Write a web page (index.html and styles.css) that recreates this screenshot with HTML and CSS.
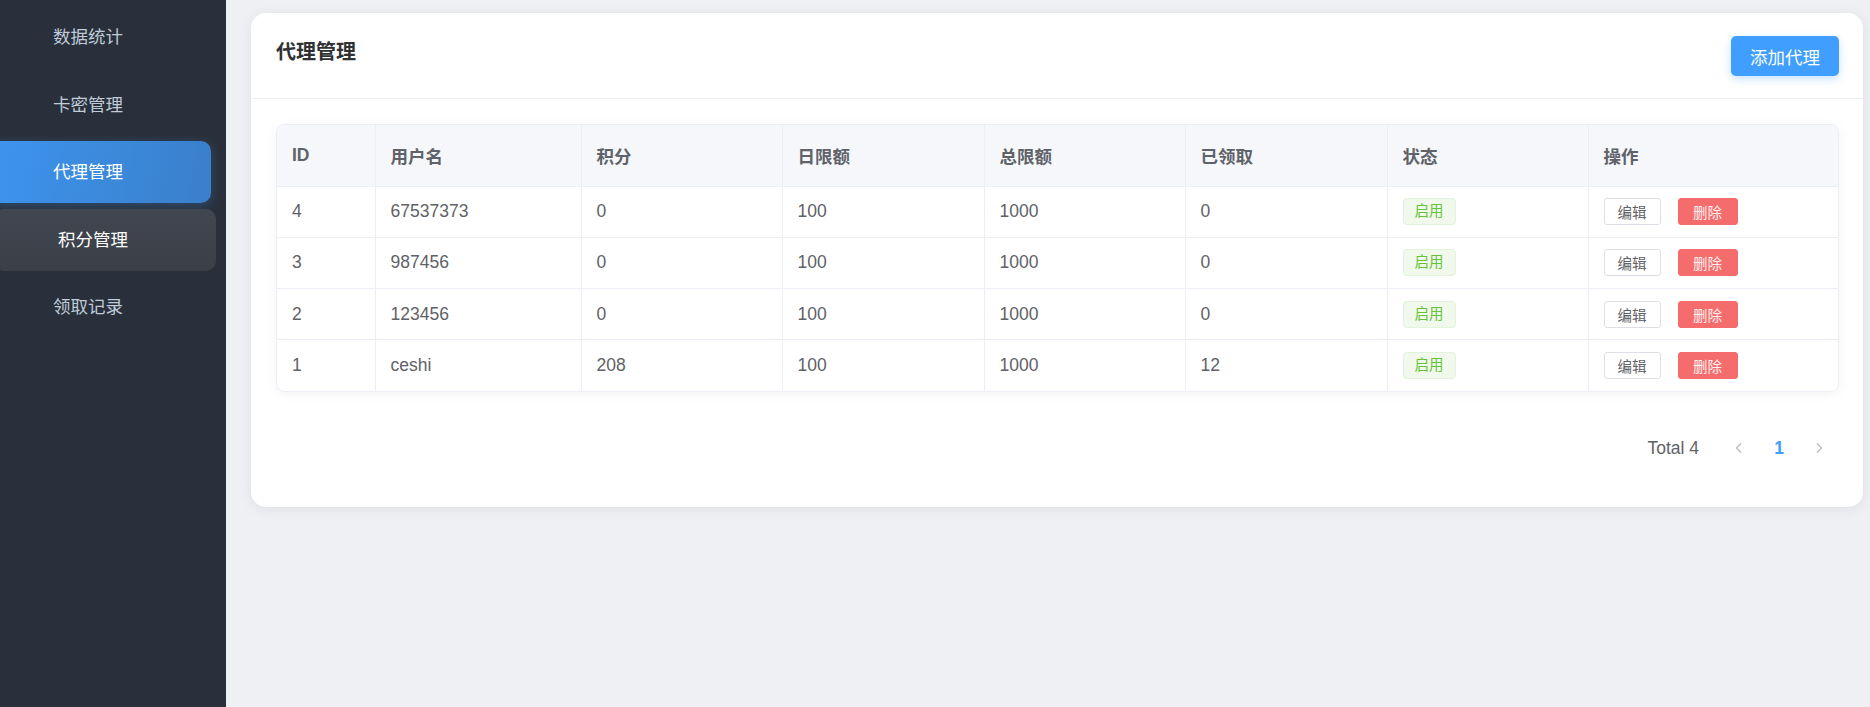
FILE: index.html
```html
<!DOCTYPE html>
<html lang="zh-CN">
<head>
<meta charset="UTF-8">
<meta name="viewport" content="width=device-width, initial-scale=1.0">
<title>代理管理</title>
<link rel="stylesheet" href="styles.css">
</head>
<body>

<div class="layout">
  <!-- 侧边菜单 -->
  <aside class="sidebar">
    <ul class="menu">
      <li class="menu-item">数据统计</li>
      <li class="menu-item">卡密管理</li>
      <li class="menu-item active">代理管理</li>
      <li class="menu-item hover">积分管理</li>
      <li class="menu-item">领取记录</li>
    </ul>
  </aside>

  <main class="main">
    <div class="card">
      <div class="card-header">
        <h2 class="card-title">代理管理</h2>
        <button class="btn-primary" type="button">添加代理</button>
      </div>

      <div class="card-body">
        <div class="table-wrap">
          <table class="agent-table">
            <colgroup>
              <col style="width: 98px">
              <col style="width: 206px">
              <col style="width: 201px">
              <col style="width: 202px">
              <col style="width: 201px">
              <col style="width: 202px">
              <col style="width: 201px">
              <col>
            </colgroup>
            <thead>
              <tr>
                <th>ID</th>
                <th>用户名</th>
                <th>积分</th>
                <th>日限额</th>
                <th>总限额</th>
                <th>已领取</th>
                <th>状态</th>
                <th>操作</th>
              </tr>
            </thead>
            <tbody>
              <tr>
                <td>4</td>
                <td>67537373</td>
                <td>0</td>
                <td>100</td>
                <td>1000</td>
                <td>0</td>
                <td><span class="tag">启用</span></td>
                <td class="actions"><button class="btn-small">编辑</button><button class="btn-small danger">删除</button></td>
              </tr>
              <tr>
                <td>3</td>
                <td>987456</td>
                <td>0</td>
                <td>100</td>
                <td>1000</td>
                <td>0</td>
                <td><span class="tag">启用</span></td>
                <td class="actions"><button class="btn-small">编辑</button><button class="btn-small danger">删除</button></td>
              </tr>
              <tr>
                <td>2</td>
                <td>123456</td>
                <td>0</td>
                <td>100</td>
                <td>1000</td>
                <td>0</td>
                <td><span class="tag">启用</span></td>
                <td class="actions"><button class="btn-small">编辑</button><button class="btn-small danger">删除</button></td>
              </tr>
              <tr>
                <td>1</td>
                <td>ceshi</td>
                <td>208</td>
                <td>100</td>
                <td>1000</td>
                <td>12</td>
                <td><span class="tag">启用</span></td>
                <td class="actions"><button class="btn-small">编辑</button><button class="btn-small danger">删除</button></td>
              </tr>
            </tbody>
          </table>
        </div>

        <!-- 分页 -->
        <div class="pagination">
          <span class="total">Total 4</span>
          <span class="page-arrow">
            <svg width="14" height="14" viewBox="0 0 14 14"><path d="M9 2.5 L4.5 7 L9 11.5" fill="none" stroke="currentColor" stroke-width="1.2"/></svg>
          </span>
          <span class="page-num">1</span>
          <span class="page-arrow">
            <svg width="14" height="14" viewBox="0 0 14 14"><path d="M5 2.5 L9.5 7 L5 11.5" fill="none" stroke="currentColor" stroke-width="1.2"/></svg>
          </span>
        </div>
      </div>
    </div>
  </main>
</div>

</body>
</html>
```

FILE: styles.css
```css
* {
  box-sizing: border-box;
}
body {
  margin: 0;
  font-family: "Liberation Sans", "Noto Sans CJK SC", sans-serif;
  background-color: #eef0f4;
  color: #606266;
}
.layout {
  display: flex;
  height: 707px;
}
.sidebar {
  width: 226px;
  flex-shrink: 0;
  background-color: #2a303b;
  padding-top: 6px;
  overflow: hidden;
}
.menu {
  list-style: none;
  margin: 0;
  padding: 0;
}
.menu-item {
  height: 62px;
  line-height: 62px;
  margin: 0 15px 5.5px -10px;
  padding-left: 63px;
  border-radius: 10px;
  font-size: 17.5px;
  color: #bfcbd9;
}
.menu-item.active {
  color: #fff;
  background: linear-gradient(100deg, #3d94ee, #3a7fca);
  box-shadow: 0 3px 12px rgba(64, 158, 255, 0.25);
}
.menu-item.hover {
  color: #fff;
  margin-right: 15px;
  transform: translateX(5px);
  background: linear-gradient(180deg, #414750, #3a3f48);
}
.main {
  flex: 1;
  padding: 13px 7px 0 25px;
}
.card {
  background-color: #fff;
  border-radius: 15px;
  box-shadow: 0 2px 14px rgba(0, 0, 0, 0.07);
}
.card-header {
  display: flex;
  justify-content: space-between;
  align-items: flex-start;
  padding: 23px 24px 22px 25px;
  border-bottom: 1px solid #ebeef5;
}
.card-title {
  margin: 0;
  font-size: 20px;
  line-height: 32px;
  font-weight: bold;
  color: #303133;
}
.btn-primary {
  height: 40px;
  padding: 0 19px;
  background-color: #409eff;
  color: #fff;
  border: none;
  border-radius: 5px;
  font-family: inherit;
  font-size: 17.5px;
  box-shadow: 0 3px 8px rgba(64, 158, 255, 0.3);
  cursor: pointer;
}
.card-body {
  padding: 25px 24px 40px 25px;
}
.table-wrap {
  border: 1px solid #ebeef5;
  border-radius: 8px;
  overflow: hidden;
  box-shadow: 0 2px 12px rgba(0, 0, 0, 0.05);
}
.agent-table {
  width: 100%;
  border-collapse: collapse;
  table-layout: fixed;
  font-size: 17.5px;
}
.agent-table th,
.agent-table td {
  text-align: left;
  padding: 0 15px;
  border-right: 1px solid #ebeef5;
  border-bottom: 1px solid #ebeef5;
}
.agent-table th:last-child,
.agent-table td:last-child {
  border-right: none;
}
.agent-table tbody tr:last-child td {
  border-bottom: none;
}
.agent-table th {
  height: 61px;
  background-color: #f5f7fa;
  font-weight: bold;
  color: #5f6269;
}
.agent-table td {
  height: 51.3px;
  color: #606266;
}
.tag {
  display: inline-block;
  height: 27px;
  line-height: 25px;
  padding: 0 11px;
  font-size: 14.5px;
  color: #67c23a;
  background-color: #f0f9eb;
  border: 1px solid #e1f3d8;
  border-radius: 4px;
}
.actions {
  padding-left: 15px !important;
}
.btn-small {
  height: 27px;
  width: 57px;
  padding: 0;
  margin-right: 17px;
  background-color: #fff;
  color: #606266;
  border: 1px solid #dcdfe6;
  border-radius: 3px;
  font-family: inherit;
  font-size: 14.5px;
  vertical-align: middle;
}
.btn-small.danger {
  width: 60px;
  background-color: #f56c6c;
  border-color: #f56c6c;
  color: #fef0f0;
}
.pagination {
  display: flex;
  justify-content: flex-end;
  align-items: center;
  height: 38px;
  margin-top: 37px;
  font-size: 17.5px;
}
.total {
  color: #606266;
  margin-right: 20px;
}
.page-arrow {
  display: flex;
  align-items: center;
  justify-content: center;
  width: 40px;
  height: 38px;
  color: #b4b8bf;
}
.page-num {
  width: 40px;
  text-align: center;
  font-weight: bold;
  color: #409eff;
}
```
